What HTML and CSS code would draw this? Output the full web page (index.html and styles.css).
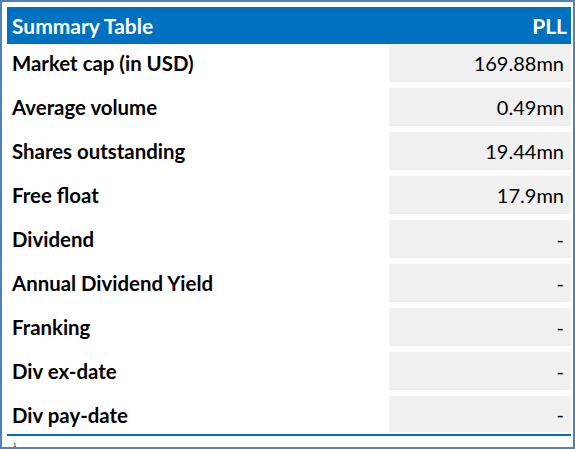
FILE: index.html
```html
<!DOCTYPE html>
<html>
<head>
<meta charset="utf-8">
<link rel="stylesheet" href="styles.css">
</head>
<body>
<div class="frame">
  <div class="table">
    <div class="head">
      <span>Summary Table</span>
      <span>PLL</span>
    </div>
    <div class="row"><div class="label">Market cap (in USD)</div><div class="value">169.88mn</div></div>
    <div class="row"><div class="label">Average volume</div><div class="value">0.49mn</div></div>
    <div class="row"><div class="label">Shares outstanding</div><div class="value">19.44mn</div></div>
    <div class="row"><div class="label">Free float</div><div class="value">17.9mn</div></div>
    <div class="row"><div class="label">Dividend</div><div class="value">-</div></div>
    <div class="row"><div class="label">Annual Dividend Yield</div><div class="value">-</div></div>
    <div class="row"><div class="label">Franking</div><div class="value">-</div></div>
    <div class="row"><div class="label">Div ex-date</div><div class="value">-</div></div>
    <div class="row last"><div class="label">Div pay-date</div><div class="value">-</div></div>
  </div>
  <div class="foot">1</div>
</div>
</body>
</html>
```
FILE: styles.css
```css
html, body {
  margin: 0;
  padding: 0;
  background: #ffffff;
}
.frame {
  box-sizing: border-box;
  width: 575px;
  height: 449px;
  border: 2px solid #4f81bd;
  padding: 5px 2px 0 5px;
  font-family: Lato, "Open Sans", sans-serif;
  color: #000;
  overflow: hidden;
}
.table {
  display: flex;
  flex-direction: column;
  border-bottom: 2px solid #0070c0;
}
.head {
  height: 37px;
  background: #0070c0;
  color: #fff;
  font-weight: 700;
  font-size: 21px;
  display: flex;
  justify-content: space-between;
  align-items: center;
  padding: 0 4px 0 5px;
}
.row {
  display: grid;
  grid-template-columns: 382px 1fr;
  height: 44px;
}
.row.last {
  height: 38px;
}
.label {
  font-weight: 700;
  font-size: 20.4px;
  display: flex;
  align-items: center;
  padding-left: 5px;
  height: 38px;
}
.value {
  background: #f0f0f0;
  height: 38px;
  font-size: 20px;
  display: flex;
  align-items: center;
  justify-content: flex-end;
  padding-right: 7px;
}
.row.last .value {
  height: 36px;
}
.foot {
  font-size: 6px;
  padding-left: 6px;
  padding-top: 6px;
  height: 6px;
  line-height: 6px;
}
```
